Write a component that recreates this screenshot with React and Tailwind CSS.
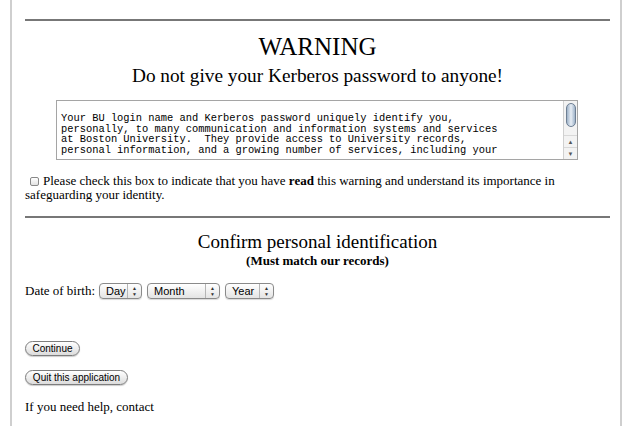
// Kerberos password warning page, old-style form
const serif = { fontFamily: '"Liberation Serif", "Times New Roman", serif' };
const ui = { fontFamily: '"Liberation Sans", Arial, sans-serif' };

function Select({ label, width }) {
  return (
    <span
      className="inline-flex h-[16px] items-center justify-between rounded-[4px] border border-[#8a8a8a] bg-gradient-to-b from-white to-[#e4e4e4] pl-[6px] text-[11px] leading-none text-black shadow-[0_1px_1px_rgba(0,0,0,0.15)]"
      style={{ width, ...ui }}
    >
      <span>{label}</span>
      <span className="flex h-full w-[14px] flex-col items-center justify-center border-l border-[#b5b5b5] text-[5px] leading-[6px] text-[#333]">
        <span>▲</span>
        <span>▼</span>
      </span>
    </span>
  );
}

function Button({ children, width }) {
  return (
    <span
      className="flex h-[15px] items-center justify-center rounded-full border border-[#7d7d7d] bg-gradient-to-b from-white to-[#dcdcdc] text-[10px] leading-none text-black shadow-[0_1px_1px_rgba(0,0,0,0.2)]"
      style={{ width, ...ui }}
    >
      {children}
    </span>
  );
}

export default function App() {
  return (
    <div className="h-[426px] w-[636px] overflow-hidden bg-white" style={serif}>
      <div className="ml-[10px] h-full w-[612px] border-x-2 border-[#cfcfcf] pl-[13px] pr-[10px] text-black">
        <div className="h-[19px]" />
        <div className="h-[2px] bg-[#777]" />
        <div className="mt-[12px] text-center text-[25px] leading-[28px]">WARNING</div>
        <div className="mt-[4px] text-center text-[19.3px] leading-[22px]">Do not give your Kerberos password to anyone!</div>

        <div className="ml-[31px] mt-[13px] flex h-[60px] w-[522px] border border-[#a5a5a5] bg-white">
          <div
            className="flex-1 overflow-hidden whitespace-pre pl-[4px] pt-[12px] text-[10.4px] leading-[10.5px]"
            style={{ fontFamily: '"Liberation Mono", "Courier New", monospace' }}
          >
            {"Your BU login name and Kerberos password uniquely identify you,\npersonally, to many communication and information systems and services\nat Boston University.  They provide access to University records,\npersonal information, and a growing number of services, including your"}
          </div>
          <div className="flex w-[14px] flex-col border-l border-[#d0d0d0] bg-[#f3f3f3]">
            <div className="mx-auto mt-[2px] h-[24px] w-[10px] rounded-full border border-[#6e7f93] bg-gradient-to-r from-[#9fb3c9] via-[#e8eef5] to-[#9fb3c9]" />
            <div className="flex-1" />
            <div className="h-[12px] border-t border-[#d8d8d8] text-center text-[6px] leading-[12px] text-[#555]">▲</div>
            <div className="h-[12px] border-t border-[#d8d8d8] text-center text-[6px] leading-[12px] text-[#555]">▼</div>
          </div>
        </div>

        <div className="mt-[14px] text-[13px] leading-[14px]">
          <span className="ml-[5px] mr-[4px] inline-block h-[9px] w-[9px] rounded-[2px] border border-[#888] bg-gradient-to-b from-white to-[#e2e2e2] align-[-1px]" />
          Please check this box to indicate that you have <b>read</b> this warning and understand its importance in safeguarding your identity.
        </div>

        <div className="mt-[14px] h-[2px] bg-[#777]" />

        <div className="mt-[13px] text-center text-[19px] leading-[22px]">Confirm personal identification</div>
        <div className="mt-[0px] text-center text-[13px] font-bold leading-[16px]">(Must match our records)</div>

        <div className="mt-[14px] flex items-center gap-[5px] text-[13px] leading-[16px]">
          <span className="mr-[-1px]">Date of birth:</span>
          <Select label="Day" width={43} />
          <Select label="Month" width={73} />
          <Select label="Year" width={49} />
        </div>

        <div className="mt-[42px]">
          <Button width={55}>Continue</Button>
        </div>
        <div className="mt-[14px]">
          <Button width={103}>Quit this application</Button>
        </div>
        <div className="mt-[14px] text-[13px] leading-[15px]">If you need help, contact</div>
      </div>
    </div>
  );
}
